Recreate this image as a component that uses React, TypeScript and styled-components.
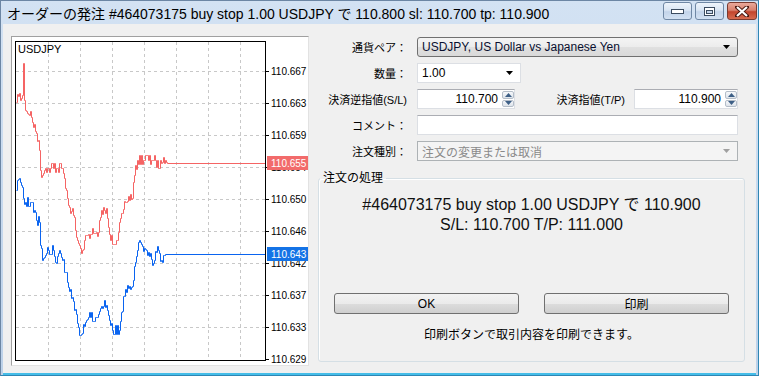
import styled, { createGlobalStyle } from "styled-components";

const GlobalStyle = createGlobalStyle`
  html, body {
    margin: 0;
    padding: 0;
    background: #ffffff;
  }
  body {
    font-family: "Liberation Sans", "Noto Sans CJK JP", sans-serif;
    font-size: 12px;
    color: #000;
  }
`;

const FONT = `"Liberation Sans", "Noto Sans CJK JP", sans-serif`;

// ---- window frame ----
const Window = styled.div`
  width: 759px;
  height: 376px;
  box-sizing: border-box;
  display: flex;
  flex-direction: column;
  background: linear-gradient(#d3e2f3, #bcd1e9);
  border: 1px solid #6c86a4;
  border-right-color: #2f86b3;
  border-bottom-color: #2f86b3;
`;

const TitleBar = styled.div`
  height: 23px;
  display: flex;
  align-items: center;
  padding-left: 6px;
`;

const TitleText = styled.div`
  flex: 1;
  font-size: 14px;
  color: #000;
  white-space: nowrap;
`;

const TitleButtons = styled.div`
  display: flex;
  gap: 3px;
  align-self: flex-start;
  margin-top: 1px;
  margin-right: 1px;
`;

const CaptionButton = styled.div<{ $close?: boolean }>`
  width: ${(p) => (p.$close ? 30 : 29)}px;
  height: 18px;
  box-sizing: border-box;
  border: 1px solid ${(p) => (p.$close ? "#7a3b30" : "#6f87a4")};
  border-radius: 3px;
  display: flex;
  align-items: center;
  justify-content: center;
  background: ${(p) =>
    p.$close
      ? "linear-gradient(#e9a99b 0%, #d8806d 45%, #c2452d 55%, #d66b4f 100%)"
      : "linear-gradient(#eef4fb 0%, #d9e5f3 45%, #c3d4ea 55%, #d3e1f2 100%)"};
`;

const Body = styled.div`
  flex: 1;
  margin: 0 2px;
  display: flex;
  background: #f0f0f0;
  padding: 12px 0 0 8px;
  border-bottom: 2px solid #45bde8;
`;

// ---- chart ----
const ChartFrame = styled.div`
  width: 298px;
  height: 330px;
  box-sizing: border-box;
  border: 1px solid #a0a0a0;
  border-right-color: #e2e2e2;
  border-bottom-color: #e2e2e2;
  background: #ffffff;
`;

const ChartSvg = styled.svg`
  display: block;
  font-family: ${FONT};
  font-size: 10px;
`;

// ---- right panel ----
const RightPanel = styled.div`
  width: 427px;
  margin-left: 9px;
  padding-top: 1px;
  display: flex;
  flex-direction: column;
`;

const FormGrid = styled.div`
  display: grid;
  grid-template-columns: 89px 321px;
  grid-auto-rows: 20px;
  column-gap: 10px;
  row-gap: 6px;
  align-items: center;
`;

const Label = styled.div`
  text-align: right;
  white-space: nowrap;
  font-size: 11px;
`;

const Combo = styled.div<{ $width?: number; $variant: "button" | "edit" | "disabled" }>`
  width: ${(p) => (p.$width ? `${p.$width}px` : "100%")};
  height: 20px;
  box-sizing: border-box;
  display: flex;
  align-items: center;
  padding: 0 6px 0 4px;
  border-radius: ${(p) => (p.$variant === "button" ? 3 : 0)}px;
  border: 1px solid
    ${(p) =>
      p.$variant === "button" ? "#707070" : p.$variant === "disabled" ? "#adb2b5" : "#dcdfe4"};
  background: ${(p) =>
    p.$variant === "button"
      ? "linear-gradient(#f4f4f4 0%, #ececec 50%, #e0e0e0 51%, #d9d9d9 100%)"
      : p.$variant === "disabled"
      ? "#f4f4f4"
      : "#ffffff"};
  color: ${(p) => (p.$variant === "disabled" ? "#8a8a8a" : p.$variant === "button" ? "#0a1030" : "#000")};
  font-size: 12px;
`;

const ComboText = styled.span`
  flex: 1;
  white-space: nowrap;
`;

const PairRow = styled.div`
  display: flex;
  align-items: center;
  height: 20px;
`;

const TpLabel = styled(Label)`
  flex: 1;
  padding-right: 9px;
`;

const SpinBox = styled.div<{ $width: number }>`
  width: ${(p) => p.$width}px;
  height: 20px;
  box-sizing: border-box;
  display: flex;
  background: #ffffff;
  border: 1px solid #dcdfe4;
  border-top-color: #abadb3;
`;

const SpinValue = styled.div`
  flex: 1;
  text-align: right;
  padding-right: 4px;
  line-height: 18px;
  font-size: 12px;
`;

const SpinButtons = styled.div`
  width: 12px;
  display: flex;
  flex-direction: column;
  gap: 1px;
  padding: 1px 0;
`;

const SpinButton = styled.div`
  flex: 1;
  box-sizing: border-box;
  border: 1px solid #b4bdc8;
  border-radius: 2px;
  background: linear-gradient(#f6f8fb, #dde3ea);
  display: flex;
  align-items: center;
  justify-content: center;
`;

const TextField = styled.div`
  height: 20px;
  box-sizing: border-box;
  background: #ffffff;
  border: 1px solid #dcdfe4;
  border-top-color: #abadb3;
`;

// ---- group box ----
const GroupBox = styled.fieldset`
  margin: 9px 0 0 0;
  padding: 0;
  height: 192px;
  box-sizing: border-box;
  min-width: 0;
  border: 1px solid #d5dfe5;
  border-radius: 3px;
  box-shadow: inset 1px 1px 0 #ffffff;
`;

const GroupLegend = styled.legend`
  margin-left: 1px;
  padding: 0 3px;
  font-size: 12px;
  line-height: 16px;
`;

const Message = styled.div`
  margin-top: 9px;
  text-align: center;
  font-size: 16px;
  line-height: 20px;
  color: #111;
`;

const ButtonRow = styled.div`
  display: flex;
  gap: 25px;
  padding: 0 15px;
  margin-top: 58px;
`;

const PushButton = styled.button`
  flex: 1;
  height: 21px;
  border: 1px solid #707070;
  border-radius: 3px;
  background: linear-gradient(#f2f2f2 0%, #ebebeb 50%, #dddddd 51%, #cfcfcf 100%);
  font-family: ${FONT};
  font-size: 12px;
  color: #000;
  padding: 0;
`;

const Footnote = styled.div`
  margin-top: 11px;
  text-align: center;
  font-size: 12px;
`;

// ---- chart data ----
type Pt = [number, number];

const RED: Pt[] = [
  [16, 102], [18, 96], [20, 100], [22, 95], [23, 63], [24, 100], [25, 110], [29, 115],
  [31, 117], [33, 127], [36, 133], [38, 140], [40, 170], [42, 175], [45, 168], [62, 168],
  [64, 178], [66, 190], [68, 205], [73, 215], [76, 237], [80, 248], [82, 250], [85, 235],
  [98, 232], [100, 217], [104, 210], [106, 208], [108, 227], [110, 240], [116, 240],
  [118, 232], [122, 213], [125, 202], [129, 200], [132, 198], [134, 175], [137, 160],
  [155, 160], [158, 168], [160, 160], [163, 157], [165, 160], [167, 163], [265, 163],
];

const BLUE: Pt[] = [
  [16, 190], [17, 180], [19, 178], [21, 185], [23, 198], [25, 202], [31, 202], [33, 212],
  [36, 220], [39, 222], [40, 245], [42, 260], [45, 255], [48, 250], [53, 250], [55, 262],
  [59, 250], [62, 260], [65, 272], [68, 287], [71, 298], [74, 310], [77, 323], [80, 335],
  [82, 333], [85, 322], [88, 317], [97, 317], [100, 308], [104, 300], [106, 305],
  [108, 315], [110, 325], [112, 330], [119, 330], [121, 312], [124, 296], [128, 288],
  [133, 280], [135, 262], [137, 250], [140, 242], [142, 246], [146, 250], [150, 253],
  [152, 265], [154, 260], [156, 252], [158, 250], [161, 260], [163, 255], [165, 254],
  [265, 254],
];

const makeRng = (seed: number) => () => {
  seed = (seed * 16807) % 2147483647;
  return seed / 2147483647;
};

// tick line drawn as steps with small jitter
const stepPath = (pts: Pt[], seed: number, flatFrom: number) => {
  const rnd = makeRng(seed);
  let d = `M${pts[0][0] + 0.5} ${pts[0][1] + 0.5}`;
  for (let i = 1; i < pts.length; i++) {
    const [x0, y0] = pts[i - 1];
    const [x1, y1] = pts[i];
    if (x0 >= flatFrom) {
      d += ` H${x1 + 0.5} V${y1 + 0.5}`;
      continue;
    }
    for (let x = x0 + 1; x <= x1; x++) {
      const base = y0 + ((y1 - y0) * (x - x0)) / (x1 - x0);
      const r = rnd();
      const jitter = r < 0.3 ? -5 : r > 0.75 ? 4 : 0;
      const y = x === x1 ? y1 : Math.round(base + jitter);
      d += ` H${x + 0.5} V${y + 0.5}`;
    }
  }
  return d;
};

const PRICES = [
  "110.667", "110.663", "110.659", "110.654", "110.650",
  "110.646", "110.642", "110.637", "110.633", "110.629",
];
const GRID_X = [48, 80, 112, 144, 176, 208, 240];

const Chart = () => (
  <ChartSvg width={296} height={328} viewBox="12 37 296 328">
    <rect x={12} y={37} width={296} height={328} fill="#ffffff" />
    {GRID_X.map((x) => (
      <line
        key={x}
        x1={x + 0.5}
        x2={x + 0.5}
        y1={42}
        y2={360}
        stroke="#c8c8c8"
        strokeDasharray="3 3"
      />
    ))}
    {PRICES.slice(0, 9).map((_, i) => (
      <line
        key={i}
        x1={16}
        x2={265}
        y1={71 + i * 32 + 0.5}
        y2={71 + i * 32 + 0.5}
        stroke="#c8c8c8"
        strokeDasharray="3 3"
      />
    ))}
    <path d={stepPath(RED, 7, 167)} fill="none" stroke="#f56464" strokeWidth={1} />
    <path d={stepPath(BLUE, 19, 165)} fill="none" stroke="#0a64f0" strokeWidth={1} />
    <rect x={15.5} y={41.5} width={250} height={319} fill="none" stroke="#000" />
    <text x={18} y={53} fill="#000" fontSize={11}>USDJPY</text>
    {PRICES.map((p, i) => (
      <g key={p}>
        <line x1={265} x2={269} y1={71 + i * 32 + 0.5} y2={71 + i * 32 + 0.5} stroke="#000" />
        <text x={271} y={71 + i * 32 + 4} fill="#000">
          {p}
        </text>
      </g>
    ))}
    <rect x={267} y={156} width={41} height={14} fill="#f26b6b" />
    <text x={271} y={167} fill="#ffffff">110.655</text>
    <rect x={267} y={247} width={41} height={14} fill="#1473e6" />
    <text x={271} y={258} fill="#ffffff">110.643</text>
  </ChartSvg>
);

// ---- small glyphs ----
const DropArrow = ({ color = "#000" }: { color?: string }) => (
  <svg width="8" height="5" viewBox="0 0 8 5">
    <path d="M0 0 H7 L3.5 4 Z" fill={color} />
  </svg>
);

const SpinArrow = ({ up }: { up?: boolean }) => (
  <svg width="7" height="4" viewBox="0 0 7 4">
    <path d={up ? "M0 4 H7 L3.5 0 Z" : "M0 0 H7 L3.5 4 Z"} fill="#3d5f86" />
  </svg>
);

const Spinner = ({ value, width }: { value: string; width: number }) => (
  <SpinBox $width={width}>
    <SpinValue>{value}</SpinValue>
    <SpinButtons>
      <SpinButton>
        <SpinArrow up />
      </SpinButton>
      <SpinButton>
        <SpinArrow />
      </SpinButton>
    </SpinButtons>
  </SpinBox>
);

const App = () => {
  return (
    <>
      <GlobalStyle />
      <Window>
        <TitleBar>
          <TitleText>
            オーダーの発注 #464073175 buy stop 1.00 USDJPY で 110.800 sl: 110.700 tp: 110.900
          </TitleText>
          <TitleButtons>
            <CaptionButton>
              <svg width="13" height="6" viewBox="0 0 13 6">
                <rect x="0.5" y="1.5" width="12" height="4" fill="#fff" stroke="#3c4c60" />
              </svg>
            </CaptionButton>
            <CaptionButton>
              <svg width="11" height="9" viewBox="0 0 11 9">
                <rect x="0.5" y="0.5" width="10" height="8" fill="#fff" stroke="#3c4c60" />
                <rect x="2.5" y="3.5" width="6" height="3" fill="#c7d6ea" stroke="#3c4c60" />
              </svg>
            </CaptionButton>
            <CaptionButton $close>
              <svg width="14" height="11" viewBox="0 0 14 11">
                <path
                  d="M2 1 L12 10 M12 1 L2 10"
                  stroke="#4a1a12"
                  strokeWidth="4"
                  strokeLinecap="square"
                />
                <path d="M2 1 L12 10 M12 1 L2 10" stroke="#ffffff" strokeWidth="2.2" />
              </svg>
            </CaptionButton>
          </TitleButtons>
        </TitleBar>
        <Body>
          <ChartFrame>
            <Chart />
          </ChartFrame>
          <RightPanel>
            <FormGrid>
              <Label>通貨ペア：</Label>
              <Combo $variant="button">
                <ComboText>USDJPY, US Dollar vs Japanese Yen</ComboText>
                <DropArrow />
              </Combo>

              <Label>数量：</Label>
              <Combo $variant="edit" $width={104}>
                <ComboText>1.00</ComboText>
                <DropArrow />
              </Combo>

              <Label>決済逆指値(S/L)</Label>
              <PairRow>
                <Spinner value="110.700" width={98} />
                <TpLabel>決済指値(T/P)</TpLabel>
                <Spinner value="110.900" width={104} />
              </PairRow>

              <Label>コメント：</Label>
              <TextField />

              <Label>注文種別：</Label>
              <Combo $variant="disabled">
                <ComboText>注文の変更または取消</ComboText>
                <DropArrow color="#a0a0a0" />
              </Combo>
            </FormGrid>

            <GroupBox>
              <GroupLegend>注文の処理</GroupLegend>
              <Message>
                #464073175 buy stop 1.00 USDJPY で 110.900
                <br />
                S/L: 110.700 T/P: 111.000
              </Message>
              <ButtonRow>
                <PushButton>OK</PushButton>
                <PushButton>印刷</PushButton>
              </ButtonRow>
              <Footnote>印刷ボタンで取引内容を印刷できます。</Footnote>
            </GroupBox>
          </RightPanel>
        </Body>
      </Window>
    </>
  );
};

export default App;
